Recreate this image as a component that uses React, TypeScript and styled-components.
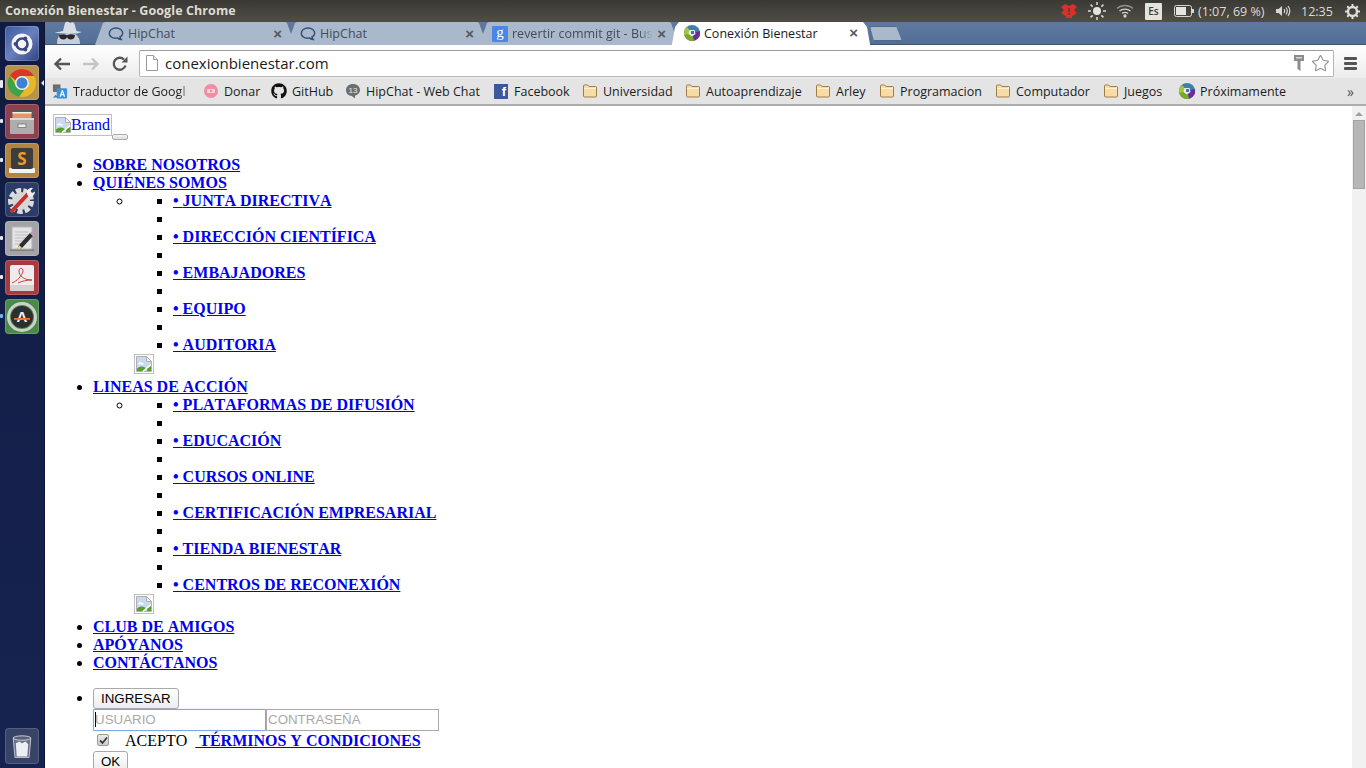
import React from "react";
import styled, { createGlobalStyle } from "styled-components";
import { FaGithub } from "react-icons/fa";
import { Star } from "lucide-react";

const uiFont = `"Open Sans", "Noto Sans", sans-serif`;

const GlobalStyle = createGlobalStyle`
  html, body {
    margin: 0;
    padding: 0;
    height: 768px;
    overflow: hidden;
    background: #fff;
  }
  * { box-sizing: border-box; }
`;

const tabs = [
  { title: "HipChat", icon: "chat" },
  { title: "HipChat", icon: "chat" },
  { title: "revertir commit git - Bus", icon: "google", fade: true },
  { title: "Conexión Bienestar", icon: "brand", active: true },
];

const bookmarks = [
  { label: "Traductor de Googl", icon: "translate", width: 151, fade: true },
  { label: "Donar", icon: "donate", width: 68 },
  { label: "GitHub", icon: "github", width: 74 },
  { label: "HipChat - Web Chat", icon: "count", width: 148 },
  { label: "Facebook", icon: "facebook", width: 89 },
  { label: "Universidad", icon: "folder", width: 103 },
  { label: "Autoaprendizaje", icon: "folder", width: 130 },
  { label: "Arley", icon: "folder", width: 64 },
  { label: "Programacion", icon: "folder", width: 116 },
  { label: "Computador", icon: "folder", width: 108 },
  { label: "Juegos", icon: "folder", width: 76 },
  { label: "Próximamente", icon: "brand", width: 125 },
];

const BrandFavicon = () => (
  <svg width="16" height="16" viewBox="0 0 16 16">
    <circle cx="8" cy="8" r="8" fill="#3f7fa8" />
    <path d="M8 8 L16 6 A8 8 0 0 1 10 15.7Z" fill="#6b2c9e" />
    <path d="M8 8 L10 15.7 A8 8 0 0 1 0.3 10Z" fill="#7cab1c" />
    <path d="M8 8 L0.3 10 A8 8 0 0 1 3 2Z" fill="#a8c83c" />
    <path d="M5.5 5 L10.5 5 L11.5 9 L8 11.5 L4.5 9Z" fill="#e9eef0" />
    <path d="M7 6 L10 6 L10 9 L7 9Z" fill="#4a6fb0" />
  </svg>
);

const ChatIcon = () => (
  <svg width="16" height="16" viewBox="0 0 16 16" fill="none">
    <path
      d="M8 2C4.2 2 1.3 4.2 1.3 7.2c0 2.8 2.6 5 6 5 .8 0 1.6-.1 2.2-.3.8.8 2 1.4 3.6 1.5-.6-.7-1-1.500-1.100-2.500 1.700-.9 2.700-2.200 2.700-3.700C14.700 4.200 11.800 2 8 2Z"
      stroke="#2f4f7c"
      strokeWidth="1.500"
    />
  </svg>
);

const TabIcon = ({ type }: { type: string }) => {
  if (type === "chat") return <ChatIcon />;
  if (type === "brand") return <BrandFavicon />;
  return <GoogleBadge>g</GoogleBadge>;
};

const FolderIcon = () => (
  <svg width="16" height="14" viewBox="0 0 16 14">
    <path
      d="M1.500 3V1.800C1.500 1.300 1.900 1 2.300 1h3.400l1.300 1.500h6.700c.5 0 .8.400.8.800V12c0 .5-.4 1-1 1H2.500c-.6 0-1-.5-1-1Z"
      fill="#f7dca6"
      stroke="#a17d48"
    />
    <path d="M2 4.500h12" stroke="#fdf1d6" />
  </svg>
);

const BookmarkIcon = ({ type }: { type: string }) => {
  switch (type) {
    case "translate":
      return (
        <svg width="17" height="17" viewBox="0 0 17 17">
          <rect x="1" y="1" width="8" height="8" fill="#6d6d6d" />
          <rect x="5" y="5" width="11" height="11" rx="1" fill="#3d8fe0" />
          <path d="M8 14l2.500-7h1l2.500 7h-1.400l-.5-1.500h-2.200l-.5 1.500Zm2.300-2.700h1.400l-.7-2.200Z" fill="#fff" />
          <path d="M1 15l3-3 2 3Z" fill="#3a7fc4" />
        </svg>
      );
    case "donate":
      return (
        <svg width="16" height="16" viewBox="0 0 16 16">
          <circle cx="8" cy="8" r="7" fill="#ee8ea0" />
          <rect x="4" y="6" width="8" height="4" rx="1" fill="#f9d3da" />
          <circle cx="8" cy="8" r="1.200" fill="#ee8ea0" />
        </svg>
      );
    case "github":
      return <FaGithub size={16} color="#111" />;
    case "count":
      return (
        <svg width="16" height="16" viewBox="0 0 16 16">
          <path d="M8 1C3.900 1 1 3.700 1 7.200c0 3.100 2.500 5.600 5.800 5.800L10 15.500V12.700c3-1 5-3 5-5.500C15 3.700 12.100 1 8 1Z" fill="#6e6e6e" />
          <text x="8" y="10" textAnchor="middle" fontSize="8" fill="#e8e8e8" fontFamily="Liberation Sans, sans-serif">13</text>
        </svg>
      );
    case "facebook":
      return <FacebookBadge>f</FacebookBadge>;
    case "brand":
      return <BrandFavicon />;
    default:
      return <FolderIcon />;
  }
};

const launcherApps = ["ubuntu", "chrome", "files", "sublime", "tools", "notes", "acrobat", "updates"];

const LauncherIcon = ({ type }: { type: string }) => {
  switch (type) {
    case "ubuntu":
      return (
        <svg viewBox="0 0 34 34" width="34" height="34">
          <circle cx="17" cy="17" r="10.500" fill="#f4f5fa" />
          <circle cx="17" cy="17" r="5.500" fill="none" stroke="#3d4880" strokeWidth="2.600" />
          <circle cx="10.500" cy="17" r="2" fill="#3d4880" />
          <circle cx="20.300" cy="11.400" r="2" fill="#3d4880" />
          <circle cx="20.300" cy="22.600" r="2" fill="#3d4880" />
        </svg>
      );
    case "chrome":
      return (
        <svg viewBox="0 0 34 34" width="34" height="34">
          <circle cx="17" cy="17" r="14" fill="#e8b82a" />
          <path d="M17 3a14 14 0 0 1 12.100 7H17a7 7 0 0 0-6.500 4.500L5 9.500A14 14 0 0 1 17 3Z" fill="#d9372c" />
          <path d="M5 9.500l6 10.500a7 7 0 0 0 8.500 3.500L14 31A14 14 0 0 1 5 9.500Z" fill="#3ca34a" />
          <circle cx="17" cy="17" r="7" fill="#e9eef6" />
          <circle cx="17" cy="17" r="5.500" fill="#3f80d0" />
        </svg>
      );
    case "files":
      return (
        <svg viewBox="0 0 34 34" width="34" height="34">
          <rect x="6" y="5" width="22" height="10" fill="#5a5a5a" />
          <rect x="7.500" y="7" width="19" height="6" fill="#e8946a" />
          <rect x="7.500" y="7" width="19" height="1.500" fill="#f6f0e8" />
          <rect x="5" y="13" width="24" height="16" rx="1" fill="#adadad" />
          <rect x="5" y="13" width="24" height="2" fill="#d8d8d8" />
          <rect x="13" y="19" width="8" height="3.500" fill="#ececec" stroke="#666" strokeWidth=".7" />
        </svg>
      );
    case "sublime":
      return (
        <svg viewBox="0 0 34 34" width="34" height="34">
          <rect x="4" y="24" width="26" height="5" rx="1" fill="#f2f2f2" />
          <rect x="6" y="4" width="22" height="21" rx="2" fill="#3d3d3b" />
          <text x="17" y="21" textAnchor="middle" fontSize="17" fontWeight="700" fill="#ef9a28" fontFamily="Open Sans, sans-serif">S</text>
        </svg>
      );
    case "tools":
      return (
        <svg viewBox="0 0 34 34" width="34" height="34">
          <circle cx="16" cy="18" r="10" fill="none" stroke="#dcdcdc" strokeWidth="6" strokeDasharray="5 2" />
          <circle cx="16" cy="18" r="9" fill="#d6d6d6" />
          <path d="M7 28L23 11" stroke="#c9302c" strokeWidth="4" strokeLinecap="round" />
          <path d="M22 11a5 5 0 0 1 6-6l-2.500 3 1.500 2 3-1.500a5 5 0 0 1-6.500 5Z" fill="#eee" />
        </svg>
      );
    case "notes":
      return (
        <svg viewBox="0 0 34 34" width="34" height="34">
          <rect x="5" y="27" width="24" height="2" fill="#808080" />
          <rect x="7" y="5" width="20" height="22" fill="#e4e4e4" stroke="#b5b5b5" />
          <path d="M10 10h13M10 13h15M10 16h11M10 19h8M10 22h6" stroke="#bdbdbd" />
          <path d="M12 28l2-5L25 11l3 3-11 12Z" fill="#2d2d2d" />
          <path d="M25 11l1.500-1.500 3 3L28 14Z" fill="#d58ad0" />
          <path d="M12 28l2-5 3 3Z" fill="#ecd98c" />
        </svg>
      );
    case "acrobat":
      return (
        <svg viewBox="0 0 34 34" width="34" height="34">
          <rect x="5" y="4" width="24" height="26" rx="2" fill="#ececec" />
          <rect x="5" y="24" width="24" height="6" rx="1" fill="#d2d2d2" />
          <path
            d="M7 22c5-2 10-7 11-12 .6-3-4-4-4 0 0 5 5 9 13 9-5 0-10 1-14 3"
            fill="none"
            stroke="#d83c3c"
            strokeWidth="1"
          />
        </svg>
      );
    default:
      return (
        <svg viewBox="0 0 34 34" width="34" height="34">
          <circle cx="17" cy="17" r="13.500" fill="none" stroke="#cfcfcf" strokeWidth="3" />
          <circle cx="17" cy="17" r="11" fill="#2e2e2e" />
          <text x="17" y="22" textAnchor="middle" fontSize="15" fontWeight="700" fill="#f2f2f2" fontFamily="Liberation Sans, sans-serif">A</text>
          <rect x="9" y="18" width="16" height="1.800" fill="#e8742c" />
        </svg>
      );
  }
};

const BrokenImage = () => (
  <svg width="16" height="16" viewBox="0 0 16 16">
    <path d="M.5.500h10l5 5v10H.5Z" fill="#c9d9f2" stroke="#b0b0b0" />
    <path d="M10.500.500v5h5Z" fill="#f4f4f4" stroke="#b0b0b0" />
    <path d="M2 8c1-2 3-2 4-1 1 0 2 .5 2 1.500H3Z" fill="#fff" />
    <path d="M1 15V12.500c2-2 5-3 8-1l2 1L7 15Z" fill="#58a12b" />
    <path d="M11 15V12l4-2v5Z" fill="#58a12b" />
    <path d="M7 15.500l8-7" stroke="#fff" strokeWidth="1.500" />
  </svg>
);

const navigation = [
  { label: "SOBRE NOSOTROS" },
  {
    label: "QUIÉNES SOMOS",
    items: ["JUNTA DIRECTIVA", "DIRECCIÓN CIENTÍFICA", "EMBAJADORES", "EQUIPO", "AUDITORIA"],
  },
  {
    label: "LINEAS DE ACCIÓN",
    items: [
      "PLATAFORMAS DE DIFUSIÓN",
      "EDUCACIÓN",
      "CURSOS ONLINE",
      "CERTIFICACIÓN EMPRESARIAL",
      "TIENDA BIENESTAR",
      "CENTROS DE RECONEXIÓN",
    ],
  },
  { label: "CLUB DE AMIGOS" },
  { label: "APÓYANOS" },
  { label: "CONTÁCTANOS" },
];

const App = () => {
  return (
    <Desktop>
      <GlobalStyle />
      <TopBar>
        <WindowTitle>Conexión Bienestar - Google Chrome</WindowTitle>
        <Indicators>
          <svg width="18" height="16" viewBox="0 0 18 16">
            <path d="M1 4l4-3 4 2 4-2 4 3-3 3 3 3-4 3-1-.8V15H6v-2.800L5 13l-4-3 3-3Z" fill="#d8302a" />
            <path d="M8.300 5h1.400v4H8.300Zm0 5h1.400v1.400H8.300Z" fill="#3f3e39" />
          </svg>
          <SunSlot>
            <svg width="18" height="18" viewBox="0 0 18 18" stroke="#dcdad4" strokeWidth="1.500">
              <circle cx="9" cy="9" r="4" fill="#e6e4de" stroke="none" />
              <path d="M9 0v3M9 15v3M0 9h3M15 9h3M2.600 2.600l2 2M13.400 13.400l2 2M2.600 15.400l2-2M13.400 4.600l2-2" />
            </svg>
          </SunSlot>
          <WifiSlot>
            <svg width="18" height="14" viewBox="0 0 18 14" fill="none" stroke="#d4d2cc" strokeWidth="1.300">
              <path d="M1 4.500c4.500-4 11.500-4 16 0" opacity=".55" />
              <path d="M3.500 7c3-2.600 8-2.600 11 0" />
              <path d="M6 9.500c1.800-1.400 4.200-1.400 6 0" />
              <circle cx="9" cy="12" r="1" fill="#d4d2cc" />
            </svg>
          </WifiSlot>
          <KeyboardBadge>Es</KeyboardBadge>
          <BatterySlot>
            <svg width="20" height="12" viewBox="0 0 20 12">
              <rect x=".5" y=".5" width="17" height="11" rx="2" fill="none" stroke="#d8d6d0" />
              <rect x="2" y="2" width="10" height="8" fill="#e6e4de" />
              <rect x="18" y="4" width="2" height="4" fill="#d8d6d0" />
            </svg>
          </BatterySlot>
          <IndicatorText>(1:07, 69 %)</IndicatorText>
          <SpeakerSlot>
            <svg width="16" height="14" viewBox="0 0 16 14" fill="none" stroke="#d8d6d0" strokeWidth="1.200">
              <path d="M1 5h2.500L7 2v10L3.500 9H1Z" fill="#d8d6d0" stroke="none" />
              <path d="M9 5c.8 1.200.8 2.800 0 4M11 3.500c1.500 2 1.500 5 0 7M13 2c2.200 3 2.200 7 0 10" />
            </svg>
          </SpeakerSlot>
          <ClockText>12:35</ClockText>
          <GearSlot>
            <svg width="15" height="15" viewBox="0 0 15 15">
              <circle cx="7.500" cy="7.500" r="4.500" fill="none" stroke="#e0ded8" strokeWidth="2.400" />
              <path
                d="M7.500 0v3M7.500 12v3M0 7.500h3M12 7.500h3M2.200 2.200l2 2M10.800 10.800l2 2M2.200 12.800l2-2M10.800 4.200l2-2"
                stroke="#e0ded8"
                strokeWidth="2"
              />
            </svg>
          </GearSlot>
        </Indicators>
      </TopBar>
      <Workspace>
        <Launcher>
          <LauncherTop>
            {launcherApps.map((app) => (
              <LauncherTile key={app} $app={app}>
                <LauncherIcon type={app} />
              </LauncherTile>
            ))}
          </LauncherTop>
          <TrashTile>
            <svg viewBox="0 0 34 34" width="30" height="34">
              <path d="M7 8h20l-2 22H9Z" fill="#8b93a6" fillOpacity=".6" stroke="#c9ccd4" />
              <ellipse cx="17" cy="8" rx="10" ry="2.500" fill="#59617a" stroke="#d5d8de" />
              <path d="M10 14l4-2 3 2 4-2 3 3-1 14H11Z" fill="#eceef2" />
            </svg>
          </TrashTile>
        </Launcher>
        <Browser>
          <TabStrip>
            <IncognitoSlot>
              <svg width="36" height="24" viewBox="0 0 36 24">
                <path d="M5 12c4 0 6-.5 8-1l2-8c1.500-2 3.500-1 5 0 2-1 3.500-1.500 4.500 1l2 7c2 .5 3 .7 5 1-4 2.500-22 2.500-26.500 0Z" fill="#d9dee6" />
                <path d="M7 24c0-6 2-9 4-10h14c2 1 5 4 5 10Z" fill="#c9ced8" />
                <path d="M9 15c3-1.200 6-1 8 .2 2-1.200 5-1.400 8-.2 0 3-2 4.500-4.500 4.500-2 0-3-1.200-3.500-2.500-.5 1.300-1.500 2.500-3.500 2.500C11 19.500 9 18 9 15Z" fill="#26282c" />
              </svg>
            </IncognitoSlot>
            {tabs.map((tab, index) => (
              <Tab key={index} $active={tab.active}>
                <TabIcon type={tab.icon} />
                <TabTitle $active={tab.active} $fade={tab.fade}>
                  {tab.title}
                </TabTitle>
                <TabClose>×</TabClose>
              </Tab>
            ))}
            <NewTab />
          </TabStrip>
          <Toolbar>
            <NavButton>
              <svg width="18" height="14" viewBox="0 0 18 14" fill="none" stroke="#555" strokeWidth="2.400">
                <path d="M17 7H3M8 1.500 2.500 7 8 12.500" />
              </svg>
            </NavButton>
            <NavButton>
              <svg width="18" height="14" viewBox="0 0 18 14" fill="none" stroke="#c4c4c4" strokeWidth="2.400">
                <path d="M1 7h14M10 1.500 15.500 7 10 12.500" />
              </svg>
            </NavButton>
            <NavButton>
              <svg width="16" height="16" viewBox="0 0 16 16" fill="none">
                <path d="M13.500 9.500A6 6 0 1 1 12 3.500" stroke="#555" strokeWidth="2.300" />
                <path d="M9.500 6.500H15.500V.5Z" fill="#555" />
              </svg>
            </NavButton>
            <Omnibox>
              <svg width="14" height="16" viewBox="0 0 14 16">
                <path d="M1.500.500h7l4 4v11h-11Z" fill="#fff" stroke="#9a9a9a" />
                <path d="M8.500.500v4h4" fill="#eee" stroke="#9a9a9a" />
              </svg>
              <UrlText>conexionbienestar.com</UrlText>
              <OmniboxActions>
                <svg width="10" height="16" viewBox="0 0 10 16">
                  <path d="M0 0h10v6H6.500v10L3.500 14V6H0Z" fill="#8c8c8c" />
                  <rect x="2" y="2" width="6" height="1.500" fill="#d8d8d8" />
                </svg>
                <Star size={19} color="#8f8f8f" strokeWidth={1.400} />
              </OmniboxActions>
            </Omnibox>
            <MenuButton>
              <span />
              <span />
              <span />
            </MenuButton>
          </Toolbar>
          <BookmarkBar>
            {bookmarks.map((mark) => (
              <Bookmark key={mark.label} $width={mark.width}>
                <BookmarkIconSlot>
                  <BookmarkIcon type={mark.icon} />
                </BookmarkIconSlot>
                <BookmarkLabel $fade={mark.fade}>{mark.label}</BookmarkLabel>
              </Bookmark>
            ))}
            <MoreMarks>»</MoreMarks>
          </BookmarkBar>
          <Viewport>
            <Page>
              <Header>
                <BrandLink href="#">
                  <BrokenImage />
                  Brand
                </BrandLink>
                <ToggleButton />
              </Header>
              <MainList>
                {navigation.map((entry) => (
                  <li key={entry.label}>
                    <MainLink href="#">{entry.label}</MainLink>
                    {entry.items && (
                      <ul>
                        <li>
                          <ul>
                            {entry.items.map((item, i) => (
                              <React.Fragment key={item}>
                                <li>
                                  <MainLink href="#">• {item}</MainLink>
                                </li>
                                {i < entry.items.length - 1 && <li />}
                              </React.Fragment>
                            ))}
                          </ul>
                        </li>
                        <ImageRow>
                          <BrokenBox>
                            <BrokenImage />
                          </BrokenBox>
                        </ImageRow>
                      </ul>
                    )}
                  </li>
                ))}
              </MainList>
              <LoginList>
                <li>
                  <FormButton>INGRESAR</FormButton>
                  <InputRow>
                    <TextField placeholder="USUARIO" $focused />
                    <TextField placeholder="CONTRASEÑA" />
                  </InputRow>
                  <TermsRow>
                    <CheckBox>
                      <svg width="9" height="9" viewBox="0 0 9 9" fill="none" stroke="#3a3a3a" strokeWidth="1.800">
                        <path d="M1 4.500l2.500 2.500L8 1.500" />
                      </svg>
                    </CheckBox>
                    {"ACEPTO\u00a0 "}
                    <MainLink href="#">&nbsp;TÉRMINOS Y CONDICIONES</MainLink>
                  </TermsRow>
                  <FormButton>OK</FormButton>
                </li>
              </LoginList>
            </Page>
            <ScrollTrack>
              <ScrollArrow />
              <ScrollThumb />
            </ScrollTrack>
          </Viewport>
        </Browser>
      </Workspace>
    </Desktop>
  );
};

const Desktop = styled.div`
  width: 1366px;
  height: 768px;
  overflow: hidden;
  display: flex;
  flex-direction: column;
`;

const TopBar = styled.header`
  height: 22px;
  flex: none;
  display: flex;
  align-items: center;
  justify-content: space-between;
  padding-left: 5px;
  background: linear-gradient(#3a3934, #4f4d46);
  font-family: ${uiFont};
`;

const WindowTitle = styled.div`
  color: #dfdbd2;
  font-size: 12.5px;
  font-weight: 700;
  letter-spacing: 0.1px;
  white-space: nowrap;
  padding-bottom: 2px;
`;

const Indicators = styled.div`
  display: flex;
  align-items: center;
  height: 22px;
  color: #dfdcd5;
  font-size: 12.5px;
  padding-right: 6px;
`;

const SunSlot = styled.span`
  display: flex;
  margin-left: 10px;
`;

const WifiSlot = styled.span`
  display: flex;
  margin-left: 10px;
`;

const KeyboardBadge = styled.span`
  width: 17px;
  height: 17px;
  margin-left: 11px;
  background: #e6e3dc;
  color: #3c3b37;
  font-size: 10px;
  font-weight: 600;
  display: flex;
  align-items: center;
  justify-content: center;
  border-radius: 1px;
`;

const BatterySlot = styled.span`
  display: flex;
  margin-left: 12px;
`;

const IndicatorText = styled.span`
  width: 68px;
  margin-left: 4px;
  white-space: nowrap;
`;

const SpeakerSlot = styled.span`
  display: flex;
  margin-left: 9px;
`;

const ClockText = styled.span`
  margin-left: 10px;
  width: 33px;
`;

const GearSlot = styled.span`
  display: flex;
  margin-left: 11px;
`;

const Workspace = styled.div`
  flex: 1;
  min-height: 0;
  display: flex;
`;

const Launcher = styled.nav`
  width: 45px;
  flex: none;
  display: flex;
  flex-direction: column;
  justify-content: space-between;
  padding: 4px 0 4px 5px;
  background: linear-gradient(#101b42, #14204a 50%, #162350);
  border-right: 1px solid #0c1534;
`;

const LauncherTop = styled.div`
  display: flex;
  flex-direction: column;
  gap: 4px;
`;

const tileColors: Record<string, string> = {
  ubuntu: "linear-gradient(135deg, #3f5aa0, #6a80bd 50%, #2f4280)",
  chrome: "#b5934f",
  files: "#8f3f4d",
  sublime: "#b4833f",
  tools: "#2b3c68",
  notes: "#a4a4a8",
  acrobat: "#a63a3f",
  updates: "#4a8a48",
};

const pipApps = ["chrome", "files", "sublime", "notes", "acrobat", "updates"];

const LauncherTile = styled.div<{ $app: string }>`
  position: relative;
  width: 34px;
  height: 35px;
  display: flex;
  align-items: center;
  justify-content: center;
  border-radius: 4px;
  background: ${(p) => tileColors[p.$app]};
  box-shadow: inset 0 0 0 1px rgba(255, 255, 255, 0.18);

  &::before {
    content: "";
    display: ${(p) => (pipApps.includes(p.$app) ? "block" : "none")};
    position: absolute;
    left: -5px;
    top: 15px;
    width: 3px;
    height: ${(p) => (p.$app === "chrome" ? "8px" : "4px")};
    border-radius: 1px;
    background: ${(p) => (p.$app === "updates" ? "#6fb8f0" : "#e8e8ee")};
  }

  &::after {
    content: "";
    display: ${(p) => (p.$app === "chrome" ? "block" : "none")};
    position: absolute;
    right: -5px;
    top: 15px;
    border: 3px solid transparent;
    border-right-color: #e8e8ee;
  }
`;

const TrashTile = styled.div`
  width: 34px;
  height: 36px;
  display: flex;
  align-items: center;
  justify-content: center;
  border-radius: 4px;
  background: rgba(120, 130, 150, 0.35);
  box-shadow: inset 0 0 0 1px rgba(255, 255, 255, 0.15);
`;

const Browser = styled.main`
  flex: 1;
  min-width: 0;
  display: flex;
  flex-direction: column;
`;

const TabStrip = styled.div`
  height: 23px;
  flex: none;
  display: flex;
  align-items: flex-end;
  background: linear-gradient(#607a9f, #526e95);
  position: relative;
  z-index: 1;
  border-bottom: 1px solid #3f5676;
`;

const IncognitoSlot = styled.div`
  width: 58px;
  height: 23px;
  flex: none;
  display: flex;
  align-items: flex-end;
  padding-left: 5px;
  overflow: hidden;
`;

const Tab = styled.div<{ $active?: boolean }>`
  width: 200px;
  height: ${(p) => (p.$active ? "28px" : "23px")};
  margin-left: -8px;
  margin-bottom: ${(p) => (p.$active ? "-6px" : "0")};
  align-self: flex-start;
  flex: none;
  display: flex;
  align-items: ${(p) => (p.$active ? "flex-start" : "center")};
  gap: 4px;
  padding: ${(p) => (p.$active ? "3px 13px 0 13px" : "0 13px 0 13px")};
  background: ${(p) => (p.$active ? "#fff" : "#a9b8cb")};
  clip-path: ${(p) =>
    p.$active
      ? "polygon(0 100%, 4px 5px, 8px 0, 192px 0, 196px 5px, 200px 100%)"
      : "polygon(0 100%, 8px 1px, 10px 0, 190px 0, 192px 1px, 200px 100%)"};
  font-family: ${uiFont};
  font-size: 12.5px;
  z-index: ${(p) => (p.$active ? 2 : 1)};
`;

const TabTitle = styled.span<{ $active?: boolean; $fade?: boolean }>`
  flex: 1;
  min-width: 0;
  white-space: nowrap;
  overflow: hidden;
  color: ${(p) => (p.$active ? "#1a1a1a" : "#444c58")};
  mask-image: ${(p) => (p.$fade ? "linear-gradient(to left, transparent, #000 14px)" : "none")};
`;

const TabClose = styled.span`
  flex: none;
  font-family: "Liberation Sans", sans-serif;
  font-size: 15px;
  line-height: 16px;
  font-weight: 700;
  color: #55595f;
`;

const GoogleBadge = styled.span`
  flex: none;
  width: 16px;
  height: 16px;
  border-radius: 1px;
  background: #4a86e8;
  color: #fff;
  font-family: "Liberation Serif", serif;
  font-size: 15px;
  line-height: 13px;
  text-align: center;
`;

const FacebookBadge = styled.span`
  display: block;
  width: 14px;
  height: 15px;
  background: #3b5998;
  color: #fff;
  font-family: "Liberation Sans", sans-serif;
  font-size: 13px;
  font-weight: 700;
  line-height: 16px;
  text-align: right;
  padding-right: 2px;
`;

const NewTab = styled.div`
  width: 32px;
  height: 15px;
  margin: 0 0 3px -1px;
  background: #a9b8cb;
  border: 1px solid #4f688b;
  clip-path: polygon(0 0, 26px 0, 100% 100%, 4px 100%);
  flex: none;
`;

const Toolbar = styled.div`
  height: 33px;
  flex: none;
  display: flex;
  align-items: flex-end;
  padding: 0 6px 1px 2px;
  background: linear-gradient(#fff, #ececec);
`;

const NavButton = styled.span`
  width: 29px;
  height: 27px;
  display: flex;
  align-items: center;
  justify-content: center;
  flex: none;
`;

const Omnibox = styled.div`
  flex: 1;
  height: 27px;
  margin-left: 5px;
  display: flex;
  align-items: center;
  gap: 6px;
  padding: 0 3px 1px 5px;
  background: #fff;
  border: 1px solid #b5b5b5;
  border-top-color: #9c9c9c;
  border-radius: 2px;
`;

const UrlText = styled.span`
  flex: 1;
  font-family: ${uiFont};
  font-size: 15px;
  color: #1a1a1a;
`;

const OmniboxActions = styled.span`
  display: flex;
  align-items: center;
  gap: 7px;
`;

const MenuButton = styled.span`
  width: 26px;
  height: 27px;
  display: flex;
  flex-direction: column;
  align-items: flex-end;
  justify-content: center;
  gap: 2px;
  padding-right: 3px;

  span {
    width: 13px;
    height: 3px;
    background: #555;
    border-radius: 1px;
  }
`;

const BookmarkBar = styled.div`
  height: 28px;
  flex: none;
  display: flex;
  align-items: center;
  padding-left: 7px;
  background: #e4e4e4;
  border-bottom: 2px solid #adadad;
  font-family: ${uiFont};
  font-size: 12.5px;
  color: #1c1c1c;
`;

const Bookmark = styled.div<{ $width: number }>`
  width: ${(p) => p.$width}px;
  flex: none;
  display: flex;
  align-items: center;
  gap: 5px;
  white-space: nowrap;
`;

const BookmarkIconSlot = styled.span`
  width: 16px;
  height: 17px;
  flex: none;
  display: flex;
  align-items: center;
  justify-content: center;
`;

const BookmarkLabel = styled.span<{ $fade?: boolean }>`
  overflow: ${(p) => (p.$fade ? "hidden" : "visible")};
  width: ${(p) => (p.$fade ? "118px" : "auto")};
  mask-image: ${(p) => (p.$fade ? "linear-gradient(to left, transparent, #000 12px)" : "none")};
`;

const MoreMarks = styled.span`
  margin-left: auto;
  padding-right: 12px;
  color: #555;
  font-size: 14px;
`;

const Viewport = styled.div`
  flex: 1;
  min-height: 0;
  display: flex;
  background: #fff;
`;

const Page = styled.div`
  flex: 1;
  min-width: 0;
  overflow: hidden;
  padding: 8px;
  font-family: "Liberation Serif", serif;
  font-size: 16px;
  line-height: 18px;
  font-kerning: none;
  color: #000;
`;

const Header = styled.div`
  height: 26px;
  display: flex;
  align-items: flex-end;
`;

const BrandLink = styled.a`
  height: 22px;
  align-self: flex-start;
  display: inline-flex;
  align-items: center;
  padding: 0 1px;
  border: 1px solid #c0c0c0;
  color: #0000ee;
  text-decoration: none;
`;

const ToggleButton = styled.button`
  width: 16px;
  height: 6px;
  padding: 0;
  margin: 0;
  border: 1px solid #a9a9a9;
  border-radius: 2px;
  background: linear-gradient(#f4f4f4, #dedede);
`;

const MainList = styled.ul`
  margin: 16px 0 16px;
  padding-left: 40px;
  font-weight: 700;

  ul {
    margin: 0;
    padding-left: 40px;
  }

  li:empty {
    height: 18px;
  }
`;

const MainLink = styled.a`
  color: #0000ee;
  font-weight: 700;
  text-decoration: underline;
`;

const ImageRow = styled.li`
  height: 24px;
  display: flex;
  align-items: flex-start;
  list-style: none;
`;

const BrokenBox = styled.span`
  width: 20px;
  height: 20px;
  margin-left: 1px;
  padding: 1px;
  border: 1px solid #c0c0c0;
  display: flex;
`;

const LoginList = styled.ul`
  margin: 0;
  padding-left: 40px;
`;

const FormButton = styled.button`
  display: block;
  height: 21px;
  padding: 0 7px;
  border: 1px solid #a9a9a9;
  border-radius: 3px;
  background: linear-gradient(#fff, #ededed);
  font-family: "Liberation Sans", sans-serif;
  font-size: 13.33px;
  color: #000;
`;

const InputRow = styled.div`
  display: flex;
`;

const TextField = styled.input<{ $focused?: boolean }>`
  width: 173px;
  height: 22px;
  padding: 0 1px 2px;
  outline: none;
  border: 1px solid ${(p) => (p.$focused ? "#7fa6e6" : "#a9a9a9")};
  border-radius: ${(p) => (p.$focused ? "1px" : "0")};
  box-shadow: ${(p) => (p.$focused ? "0 0 1px #7fa6e6" : "none")};
  background: ${(p) => (p.$focused ? "linear-gradient(#000, #000) 1px 2px / 1px 15px no-repeat #fff" : "#fff")};
  font-family: "Liberation Sans", sans-serif;
  font-size: 13.33px;

  &::placeholder {
    color: #a9a9a9;
    opacity: 1;
  }
`;

const TermsRow = styled.div`
  height: 20px;
  display: flex;
  align-items: center;
  white-space: pre;
`;

const CheckBox = styled.span`
  width: 12px;
  height: 12px;
  margin: 0 16px 2px 4px;
  display: flex;
  align-items: center;
  justify-content: center;
  border: 1px solid #9a9a9a;
  border-radius: 2px;
  background: linear-gradient(#e8e8e8, #cfcfcf);
`;

const ScrollTrack = styled.div`
  width: 14px;
  flex: none;
  padding-top: 6px;
  background: #f1f1f1;
  display: flex;
  flex-direction: column;
  align-items: center;
`;

const ScrollArrow = styled.div`
  width: 0;
  height: 0;
  border: 4px solid transparent;
  border-top: 0;
  border-bottom: 4px solid #a0a0a0;
`;

const ScrollThumb = styled.div`
  width: 12px;
  height: 69px;
  margin-top: 4px;
  background: #b6b6b6;
  border: 1px solid #a2a2a2;
`;

export default App;
